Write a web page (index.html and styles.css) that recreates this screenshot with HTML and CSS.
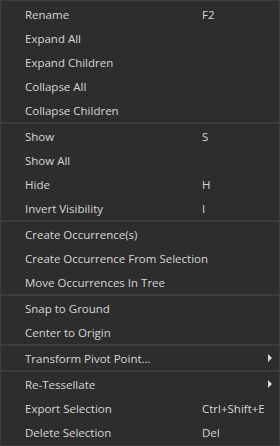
FILE: index.html
```html
<!DOCTYPE html>
<html lang="en">
<head>
    <meta charset="UTF-8">
    <meta name="viewport" content="width=device-width, initial-scale=1.0">
    <title>Context Menu</title>
    <link rel="stylesheet" href="styles.css">
</head>
<body>

    <div class="menu">
        <!-- Naming / tree -->
        <div class="item"><span class="label">Rename</span><span class="key">F2</span></div>
        <div class="item"><span class="label">Expand All</span></div>
        <div class="item"><span class="label">Expand Children</span></div>
        <div class="item"><span class="label">Collapse All</span></div>
        <div class="item"><span class="label">Collapse Children</span></div>
        <div class="sep"></div>

        <!-- Visibility -->
        <div class="item"><span class="label">Show</span><span class="key">S</span></div>
        <div class="item"><span class="label">Show All</span></div>
        <div class="item"><span class="label">Hide</span><span class="key">H</span></div>
        <div class="item"><span class="label">Invert Visibility</span><span class="key">I</span></div>
        <div class="sep"></div>

        <!-- Occurrences -->
        <div class="item"><span class="label">Create Occurrence(s)</span></div>
        <div class="item"><span class="label">Create Occurrence From Selection</span></div>
        <div class="item"><span class="label">Move Occurrences In Tree</span></div>
        <div class="sep"></div>

        <div class="item"><span class="label">Snap to Ground</span></div>
        <div class="item"><span class="label">Center to Origin</span></div>
        <div class="sep"></div>

        <div class="item sub"><span class="label">Transform Pivot Point...</span><span class="arrow"></span></div>
        <div class="sep"></div>

        <div class="item sub"><span class="label">Re-Tessellate</span><span class="arrow"></span></div>
        <div class="item"><span class="label">Export Selection</span><span class="key">Ctrl+Shift+E</span></div>
        <div class="item"><span class="label">Delete Selection</span><span class="key">Del</span></div>
    </div>

</body>
</html>
```

FILE: styles.css
```css
html, body {
    margin: 0;
    background: #2b2b2b;
}
body {
    font-family: 'Open Sans', 'Noto Sans', sans-serif;
    font-size: 11.5px;
    color: #d6d6d6;
}
.menu {
    width: 280px;
    height: 446px;
    box-sizing: border-box;
    border: 1px solid #3e3e3e;
    background: #2d2d2d;
    padding: 1px 0;
    display: flex;
    flex-direction: column;
}
.item {
    height: 24px;
    display: flex;
    align-items: center;
    padding-left: 24px;
    padding-right: 7px;
    white-space: nowrap;
}
.label {
    width: 177px;
    flex-shrink: 0;
}
.key {
    flex: 1;
}
.sub .arrow {
    margin-left: auto;
    width: 0;
    height: 0;
    border-top: 4px solid transparent;
    border-bottom: 4px solid transparent;
    border-left: 4px solid #d6d6d6;
}
.sep {
    height: 2px;
    background: #3c3c3c;
}
```
